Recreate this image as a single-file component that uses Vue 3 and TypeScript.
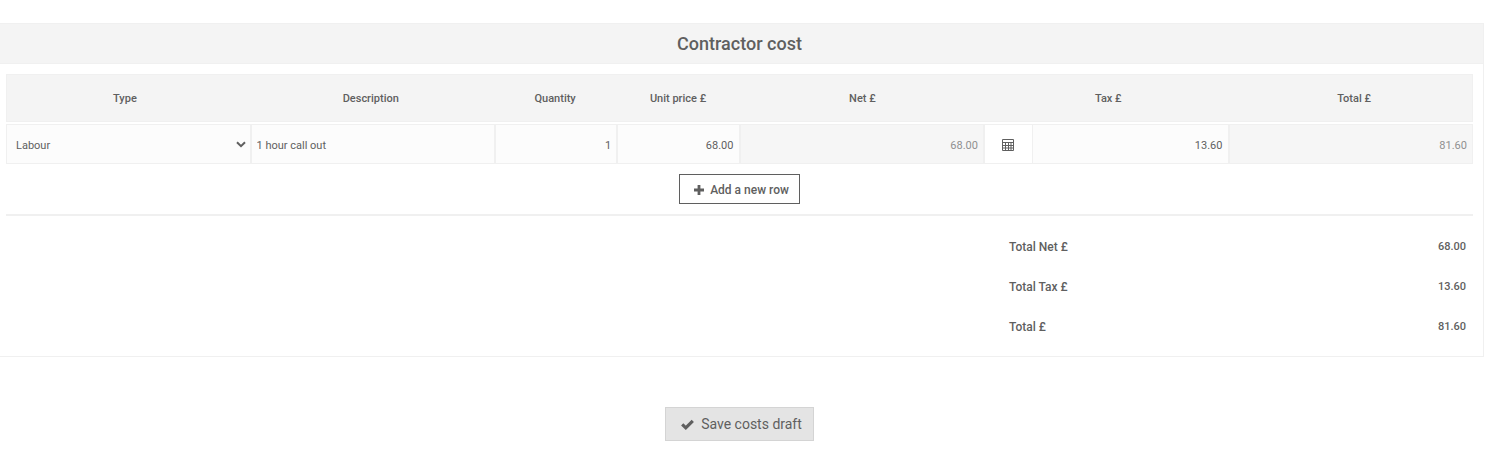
<script setup lang="ts">
import { computed, reactive } from 'vue'

interface CostRow {
  type: string
  description: string
  quantity: string
  unitPrice: string
  tax: string
}

const headings: string[] = ['Type', 'Description', 'Quantity', 'Unit price £', 'Net £', 'Tax £', 'Total £']
const types: string[] = ['Labour', 'Materials', 'Other']

const rows = reactive<CostRow[]>([
  { type: 'Labour', description: '1 hour call out', quantity: '1', unitPrice: '68.00', tax: '13.60' },
])

const net = (row: CostRow): number => Number(row.quantity) * Number(row.unitPrice)
const total = (row: CostRow): number => net(row) + Number(row.tax)
const sum = (pick: (row: CostRow) => number): string =>
  rows.reduce((acc, row) => acc + pick(row), 0).toFixed(2)

const totals = computed(() => [
  { label: 'Total Net £', value: sum(net) },
  { label: 'Total Tax £', value: sum((row) => Number(row.tax)) },
  { label: 'Total £', value: sum(total) },
])

function addRow(): void {
  rows.push({ type: 'Labour', description: '', quantity: '1', unitPrice: '0.00', tax: '0.00' })
}

function calculateTax(row: CostRow): void {
  row.tax = (net(row) * 0.2).toFixed(2)
}
</script>

<template>
  <main class="page">
    <section class="panel">
      <h2 class="panel-title">Contractor cost</h2>
      <div class="panel-body">
        <table class="costs">
          <thead>
            <tr>
              <th v-for="heading in headings" :key="heading" scope="col">{{ heading }}</th>
            </tr>
          </thead>
          <tbody>
            <tr v-for="(row, i) in rows" :key="i">
              <td class="select-cell">
                <select v-model="row.type" class="field" aria-label="Type">
                  <option v-for="type in types" :key="type">{{ type }}</option>
                </select>
                <svg class="chevron" viewBox="0 0 10 7" aria-hidden="true">
                  <path d="M1 1.2 5 5.2 9 1.2" fill="none" stroke="currentColor" stroke-width="2" />
                </svg>
              </td>
              <td><input v-model="row.description" class="field" type="text" aria-label="Description" /></td>
              <td><input v-model="row.quantity" class="field number" type="text" aria-label="Quantity" /></td>
              <td><input v-model="row.unitPrice" class="field number" type="text" aria-label="Unit price £" /></td>
              <td><input :value="net(row).toFixed(2)" class="field number" type="text" aria-label="Net £" disabled /></td>
              <td class="tax-cell">
                <button class="calc" type="button" aria-label="Calculate tax" @click="calculateTax(row)">
                  <svg viewBox="0 0 12 12" aria-hidden="true">
                    <path
                      d="M.5.5h11v11H.5zM.5 3.5h11M.5 6.5h11M.5 9h11M3.5 3.5v8M6.5 3.5v8M9 3.5v8"
                      fill="none"
                      stroke="currentColor"
                    />
                  </svg>
                </button>
                <input v-model="row.tax" class="field number" type="text" aria-label="Tax £" />
              </td>
              <td><input :value="total(row).toFixed(2)" class="field number" type="text" aria-label="Total £" disabled /></td>
            </tr>
          </tbody>
        </table>

        <div class="add-bar">
          <button class="add" type="button" @click="addRow">
            <svg viewBox="0 0 10 10" aria-hidden="true">
              <path d="M5 0v10M0 5h10" fill="none" stroke="currentColor" stroke-width="2.8" />
            </svg>
            Add a new row
          </button>
        </div>

        <dl class="totals">
          <div v-for="line in totals" :key="line.label" class="total-line">
            <dt>{{ line.label }}</dt>
            <dd>{{ line.value }}</dd>
          </div>
        </dl>
      </div>
    </section>

    <div class="save-bar">
      <button class="save" type="button">
        <svg viewBox="0 0 13 11" aria-hidden="true">
          <path d="M1.2 5.4 4.8 8.8 11.8 1.8" fill="none" stroke="currentColor" stroke-width="3.2" />
        </svg>
        Save costs draft
      </button>
    </div>
  </main>
</template>

<style>
body {
  margin: 0;
  background: #fff;
}
</style>

<style scoped>
.page {
  box-sizing: border-box;
  margin-left: -5px;
  padding: 23px 12px 16px 0;
  color: #5f5f5f;
  font-family: Roboto, 'Liberation Sans', sans-serif;
  font-size: 11px;
}

.page * {
  box-sizing: border-box;
}

.panel {
  border: 1px solid #f0f0f0;
}

.panel-title {
  margin: 0;
  border-bottom: 1px solid #f0f0f0;
  background: #f4f4f4;
  font-size: 18px;
  font-weight: 500;
  line-height: 39px;
  text-align: center;
}

.panel-body {
  padding: 10px;
}

.costs {
  display: block;
}

.costs thead {
  display: block;
  margin-bottom: 2px;
  border: 1px solid #f0f0f0;
  background: #f4f4f4;
}

.costs tbody {
  display: block;
}

.costs tr {
  display: grid;
  grid-template-columns: 2fr 2fr 1fr 1fr 2fr 2fr 2fr;
}

.costs thead tr {
  margin: 0 -5px;
}

.costs th {
  padding: 2px 0 0;
  font-weight: 500;
  line-height: 44px;
  text-align: center;
}

.costs td {
  display: flex;
  min-width: 0;
  padding: 0;
}

.field {
  flex: 1;
  width: 100%;
  min-width: 0;
  height: 40px;
  margin: 0;
  padding: 2px 5px 0;
  border: 1px solid #f0f0f0;
  border-radius: 0;
  background: #fcfcfc;
  color: inherit;
  font: inherit;
  appearance: none;
}

.field:disabled {
  background: #f6f6f6;
  color: #909090;
  opacity: 1;
}

.number {
  text-align: right;
}

.costs .select-cell {
  display: grid;
  align-items: center;
}

.select-cell .field {
  grid-area: 1 / 1;
  padding: 2px 24px 0 9px;
}

.chevron {
  grid-area: 1 / 1;
  justify-self: end;
  width: 10px;
  height: 7px;
  margin-right: 5px;
  pointer-events: none;
}

.calc {
  display: flex;
  align-items: center;
  justify-content: center;
  width: 48px;
  height: 40px;
  padding: 2px 2px 0 0;
  border: 1px solid #f0f0f0;
  border-right: 0;
  background: #fff;
  color: inherit;
}

.calc svg {
  width: 12px;
  height: 12px;
}

.add-bar {
  display: flex;
  justify-content: center;
  padding: 10px 0;
  border-bottom: 2px solid #f0f0f0;
}

.add,
.save {
  display: flex;
  align-items: center;
  justify-content: center;
  color: inherit;
  font-family: inherit;
}

.add {
  gap: 6px;
  height: 30px;
  padding: 2px 10px 0 14px;
  border: 1px solid #5f5f5f;
  background: #fff;
  font-size: 12px;
  font-weight: 500;
}

.add svg {
  width: 10px;
  height: 10px;
}

.totals {
  width: 33.333%;
  margin: 11px 0 -1px auto;
  padding: 0 7px 0 25px;
  font-weight: 500;
}

.total-line {
  display: flex;
  justify-content: space-between;
  line-height: 40px;
}

.total-line dt {
  font-size: 12px;
}

.total-line dd {
  margin: 0;
}

.save-bar {
  display: flex;
  justify-content: center;
  padding-top: 50px;
}

.save {
  gap: 7px;
  height: 34px;
  padding: 0 11px 0 15px;
  border: 1px solid #d4d4d4;
  background: #e4e4e4;
  font-size: 14px;
}

.save svg {
  width: 13px;
  height: 11px;
}
</style>
